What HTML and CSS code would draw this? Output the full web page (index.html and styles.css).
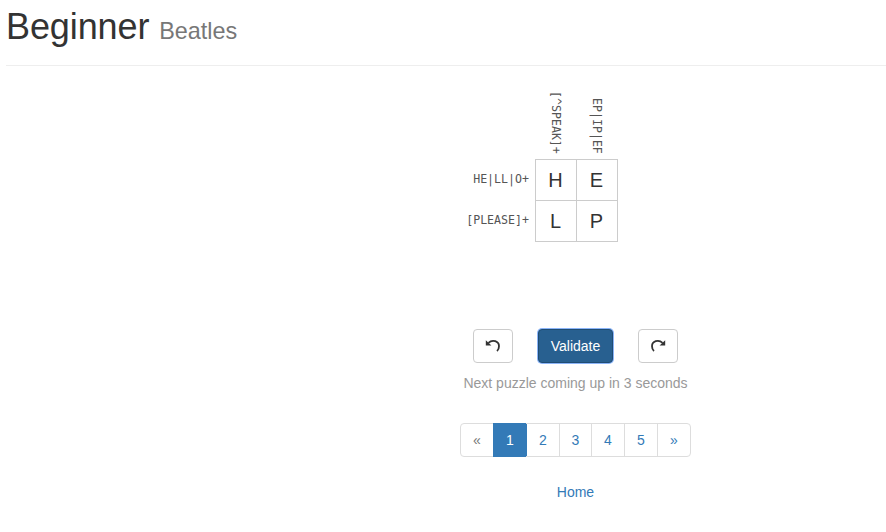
FILE: index.html
```html
<!DOCTYPE html>
<html lang="en">
<head>
<meta charset="utf-8">
<title>Beginner – Beatles</title>
<link rel="stylesheet" href="styles.css">
</head>
<body>
<header class="page-header"><h1>Beginner <small>Beatles</small></h1></header>
<main class="container">
  <div class="puzzle">
    <div class="column-clues">
      <div class="clue vertical">[^SPEAK]+</div>
      <div class="clue vertical">EP|IP|EF</div>
    </div>
    <div class="row-clues">
      <div class="clue">HE|LL|O+</div>
      <div class="clue">[PLEASE]+</div>
    </div>
    <div class="board">
      <div class="cell">H</div><div class="cell">E</div>
      <div class="cell">L</div><div class="cell">P</div>
    </div>
  </div>
  <div class="actions">
    <button class="btn" aria-label="Undo"><svg width="16" height="16" viewBox="0 0 16 16"><path class="arc" d="M3.4 4.8C7.6 1 14 3.2 14 8.2Q14 11.2 12 13"/><path class="head" d="M.8 2.2V7.4H6.4Z"/></svg></button>
    <button class="btn primary">Validate</button>
    <button class="btn" aria-label="Redo"><svg width="16" height="16" viewBox="0 0 16 16"><path class="arc" d="M12.6 4.8C8.4 1 2 3.2 2 8.2Q2 11.2 4 13"/><path class="head" d="M15.2 2.2V7.4H9.6Z"/></svg></button>
  </div>
  <p class="status">Next puzzle coming up in 3 seconds</p>
  <nav class="pagination">
    <a class="page disabled">«</a><a class="page active">1</a><a class="page">2</a><a class="page">3</a><a class="page">4</a><a class="page">5</a><a class="page">»</a>
  </nav>
  <a class="home">Home</a>
</main>
</body>
</html>
```
FILE: styles.css
```css
* { box-sizing: border-box; }
body {
  margin: 0 0 0 6px;
  background: #fff;
  color: #333;
  font: 14px/20px "Liberation Sans", Arial, sans-serif;
}
.container {
  padding-left: 259px;
  display: flex;
  flex-direction: column;
  align-items: center;
}
.page-header {
  height: 66px;
  padding-top: 7px;
  border-bottom: 1px solid #eee;
}
h1 { margin: 0; font-size: 36px; line-height: 39px; font-weight: 400; letter-spacing: -0.1px; }
h1 small { font-size: 23.4px; line-height: 1; color: #777; letter-spacing: 0; }
.puzzle {
  display: grid;
  grid-template-columns: 83px 83px 83px;
  grid-template-rows: 73px 83px;
  margin-top: 20px;
  margin-left: 1px;
}
.column-clues {
  grid-column: 2;
  display: grid;
  grid-template-columns: 41px 41px;
  padding-bottom: 5px;
}
.row-clues {
  grid-column: 1;
  display: grid;
  grid-template-rows: 41px 41px;
  padding-right: 5.5px;
}
.clue {
  font: 11.6px/40px "DejaVu Sans Mono", monospace;
  color: #555;
  text-align: right;
  white-space: nowrap;
}
.vertical { writing-mode: vertical-rl; }
.board {
  display: grid;
  grid-template-columns: 40px 40px;
  grid-template-rows: 40px 40px;
  gap: 1px;
  border: 1px solid #ccc;
  background: #ccc;
}
.cell { background: #fff; font-size: 20px; line-height: 40px; text-align: center; }
.actions { display: flex; gap: 25px; margin-top: 87px; }
.btn {
  width: 40px;
  height: 34px;
  padding: 0;
  display: flex;
  align-items: center;
  justify-content: center;
  border: 1px solid #ccc;
  border-radius: 4px;
  background: #fff;
  color: #333;
  font: inherit;
}
.primary {
  width: 75px;
  border-color: #204d74;
  background: #286090;
  color: #fff;
  box-shadow: 0 0 0 1px #8ab4f8;
}
.arc { fill: none; stroke: #333; stroke-width: 1.8; }
.head { fill: #333; }
.status { margin: 10px 0 30px; color: #999; }
.pagination { display: flex; border: 1px solid #ddd; border-radius: 4px; }
.page {
  width: 33px;
  height: 32px;
  line-height: 32px;
  text-align: center;
  color: #337ab7;
  border-left: 1px solid #ddd;
}
.page:first-child { width: 32px; border-left: 0; }
.page.disabled { color: #777; }
.page.active {
  height: 34px;
  margin: -1px 0;
  line-height: 34px;
  background: #337ab7;
  border-color: #337ab7;
  color: #fff;
}
.active + .page { border-color: #337ab7; }
.page:nth-child(4) { width: 32px; }
.home { margin-top: 25px; color: #337ab7; }
```
